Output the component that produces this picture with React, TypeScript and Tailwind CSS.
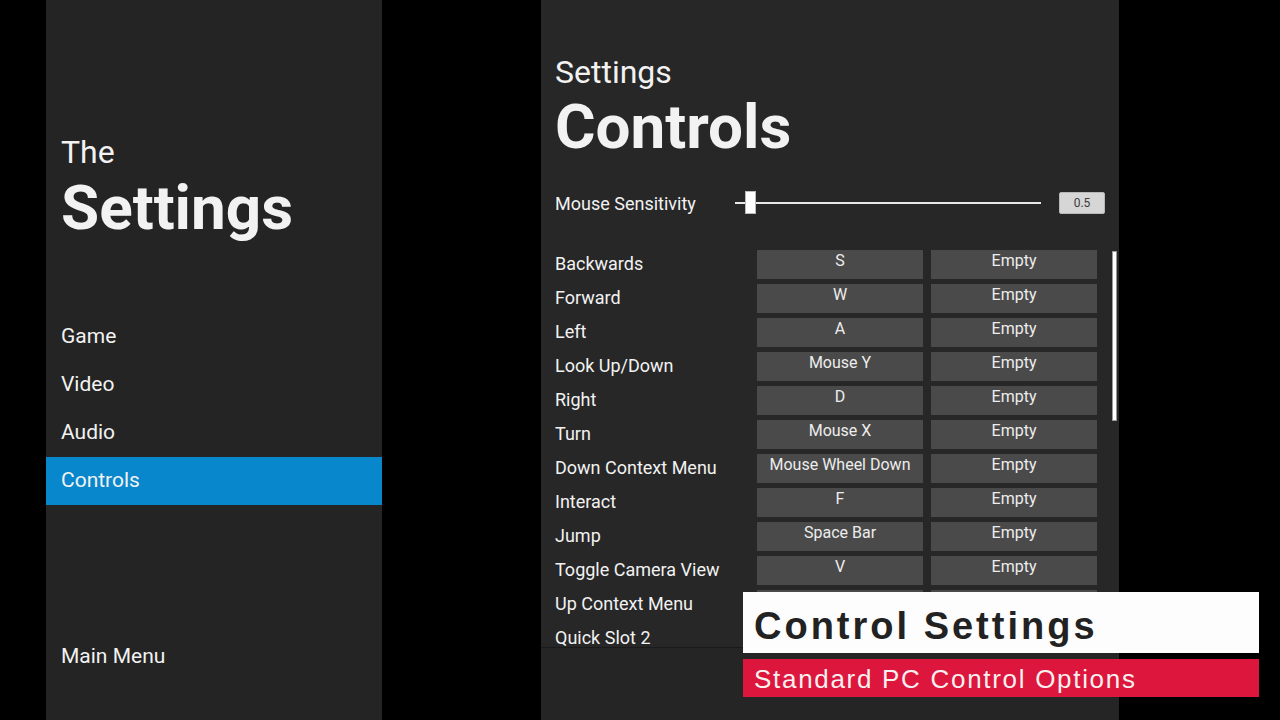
const bindings: [string, string][] = [
  ["Backwards", "S"],
  ["Forward", "W"],
  ["Left", "A"],
  ["Look Up/Down", "Mouse Y"],
  ["Right", "D"],
  ["Turn", "Mouse X"],
  ["Down Context Menu", "Mouse Wheel Down"],
  ["Interact", "F"],
  ["Jump", "Space Bar"],
  ["Toggle Camera View", "V"],
  // these two sit under the caption, their key text is covered
  ["Up Context Menu", ""],
  ["Quick Slot 2", ""],
];

const menu = ["Game", "Video", "Audio", "Controls"];

function KeyButton({ label }: { label: string }) {
  return (
    <div className="w-[166px] h-[29px] bg-[#4a4a4a] text-[#ededed] text-[16px] leading-[22px] text-center">
      {label}
    </div>
  );
}

export default function App() {
  return (
    <div className="relative w-[1280px] h-[720px] bg-black flex overflow-hidden font-['Roboto',sans-serif] text-[#f2f2f2]">
      {/* left menu */}
      <div className="ml-[46px] w-[336px] h-full bg-[#242424] flex flex-col pt-[133px]">
        <div className="pl-[15px] text-[32px] leading-[38px]">The</div>
        <div className="pl-[15px] mt-[5px] text-[62px] leading-[64px] font-bold">Settings</div>
        <div className="mt-[73px] flex flex-col">
          {menu.map((m) => (
            <div
              key={m}
              className={`h-[48px] pl-[15px] flex items-center text-[21px] ${
                m === "Controls" ? "bg-[#0987cc]" : ""
              }`}
            >
              {m}
            </div>
          ))}
        </div>
        <div className="mt-[128px] h-[48px] pl-[15px] flex items-center text-[21px]">Main Menu</div>
      </div>

      {/* controls panel */}
      <div className="ml-[159px] w-[578px] h-full bg-[#272727] flex flex-col pt-[54px]">
        <div className="pl-[14px] text-[32px] leading-[36px]">Settings</div>
        <div className="pl-[14px] mt-[4px] text-[62px] leading-[66px] font-bold">Controls</div>

        <div className="pl-[14px] mt-[31px] h-[24px] flex items-center">
          <div className="w-[180px] text-[18px]">Mouse Sensitivity</div>
          <div className="relative w-[306px] h-[2px] bg-[#e8e8e8]">
            <div className="absolute left-[10px] top-[-11px] w-[11px] h-[23px] bg-white border border-[#bbb]" />
          </div>
          <div className="ml-[18px] w-[46px] h-[22px] bg-[#d6d6d6] border border-[#b8b8b8] rounded-[2px] text-[#3a3a3a] text-[12px] flex items-center justify-center">
            0.5
          </div>
        </div>

        <div className="mt-[34px] h-[398px] overflow-hidden flex pl-[14px]">
          <div className="w-[542px] flex flex-col">
            {bindings.map(([name, key]) => (
              <div key={name} className="h-[34px] shrink-0 flex items-start pt-[1px]">
                <div className="w-[202px] h-[29px] leading-[27px] text-[18px]">{name}</div>
                <KeyButton label={key} />
                <div className="ml-[8px]">
                  <KeyButton label={key ? "Empty" : ""} />
                </div>
              </div>
            ))}
          </div>
          <div className="ml-[15px] mt-[2px] w-[5px] h-[170px] bg-white border border-[#9a9a9a]" />
        </div>
        <div className="flex-1 border-t border-[#1a1a1a] bg-[#252525]" />
      </div>

      {/* caption overlay */}
      <div className="absolute left-[743px] top-[592px] w-[516px] flex flex-col gap-[6px] font-['Liberation_Sans',Arial,sans-serif]">
        <div className="h-[61px] bg-[#fdfdfd] pl-[11px] pt-[7px] text-[#222] text-[38px] leading-[54px] font-bold tracking-[3px]">
          Control Settings
        </div>
        <div className="h-[38px] bg-[#dc163c] pl-[11px] text-[#f8f0f0] text-[26px] leading-[40px] tracking-[1.7px]">
          Standard PC Control Options
        </div>
      </div>
    </div>
  );
}
